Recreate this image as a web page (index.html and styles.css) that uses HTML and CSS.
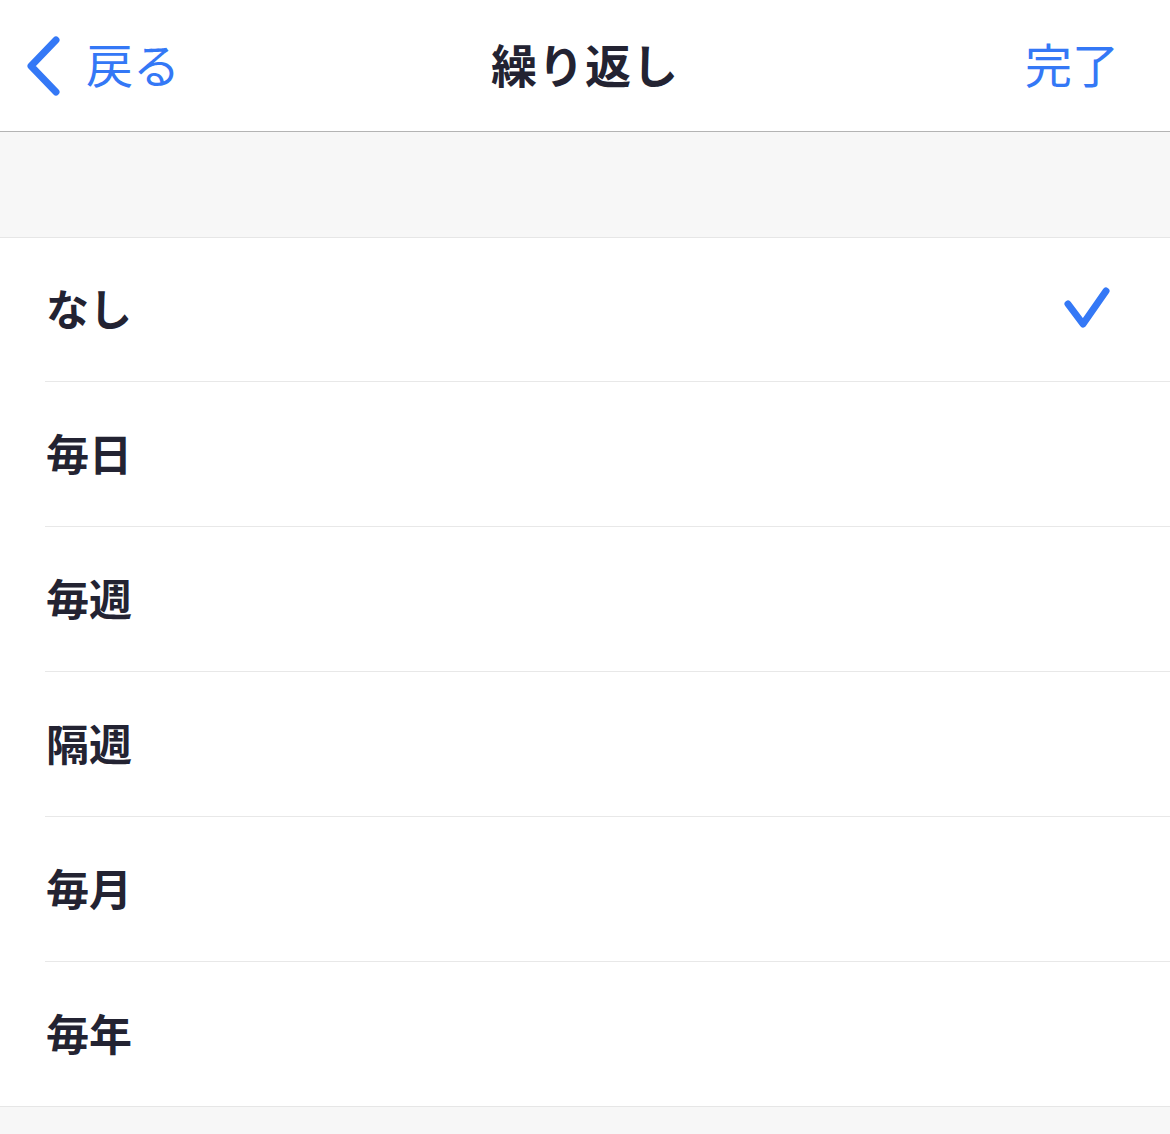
FILE: index.html
```html
<!DOCTYPE html>
<html lang="ja">
<head>
<meta charset="utf-8">
<link rel="stylesheet" href="styles.css">
</head>
<body>
<header class="nav">
  <div class="nav-left">
    <svg class="chev" width="40" height="60" viewBox="0 0 40 60"><path d="M32 4 L7 30 L32 56" fill="none" stroke="#3478f6" stroke-width="7" stroke-linecap="round" stroke-linejoin="round"/></svg>
    <span class="link back">戻る</span>
  </div>
  <h1 class="title">繰り返し</h1>
  <div class="nav-right"><span class="link">完了</span></div>
</header>
<div class="spacer"></div>
<ul class="list">
  <li class="row"><span class="label">なし</span>
    <svg class="check" width="52" height="52" viewBox="0 0 52 52"><path d="M6 20 L21 40 L44 7" fill="none" stroke="#3478f6" stroke-width="7" stroke-linecap="round" stroke-linejoin="round"/></svg>
  </li>
  <li class="row"><span class="label">毎日</span></li>
  <li class="row"><span class="label">毎週</span></li>
  <li class="row"><span class="label">隔週</span></li>
  <li class="row"><span class="label">毎月</span></li>
  <li class="row"><span class="label">毎年</span></li>
</ul>
<div class="footer"></div>
</body>
</html>
```
FILE: styles.css
```css
html, body {
  margin: 0;
  padding: 0;
  background: #f7f7f7;
  font-family: "Noto Sans CJK JP", "Noto Sans", sans-serif;
  color: #232332;
}
.nav {
  height: 132px;
  box-sizing: border-box;
  padding-bottom: 6px;
  background: #ffffff;
  border-bottom: 1px solid #b4b4b4;
  display: grid;
  grid-template-columns: 1fr auto 1fr;
  align-items: center;
}
.nav-left {
  display: flex;
  align-items: center;
  padding-left: 24px;
  gap: 22px;
}
.chev { display: block; margin-top: 6px; }
.link {
  color: #3478f6;
  font-size: 47px;
  font-weight: 400;
  line-height: 1;
}
.nav-right {
  display: flex;
  justify-content: flex-end;
  padding-right: 51px;
}
.title {
  margin: 0;
  font-size: 46px;
  font-weight: 700;
  line-height: 1;
  letter-spacing: 1px;
}
.spacer {
  height: 105px;
  background: #f7f7f7;
  border-bottom: 1px solid #e6e6e6;
}
.list {
  list-style: none;
  margin: 0;
  padding: 0 0 0 45px;
  background: #ffffff;
  border-bottom: 1px solid #e6e6e6;
}
.row {
  height: 145px;
  box-sizing: border-box;
  padding-bottom: 4px;
  display: flex;
  align-items: center;
  justify-content: space-between;
  padding-right: 56px;
  border-bottom: 1px solid #e8e8e8;
}
.row:first-child { height: 144px; }
.row:last-child { height: 144px; border-bottom: none; }
.label {
  font-size: 43px;
  font-weight: 600;
  line-height: 1;
  padding-left: 1px;
}
.check { display: block; margin-top: 4px; }
.footer { height: 40px; }
```
